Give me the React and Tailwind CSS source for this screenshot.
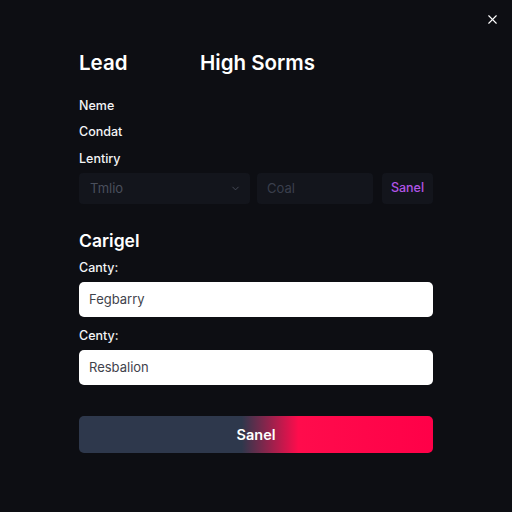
import { X, ChevronDown } from 'lucide-react'

export default function App() {
  return (
    <div
      className="relative w-[512px] h-[512px] bg-[#0d0e13] text-white overflow-hidden"
      style={{ fontFamily: 'Inter, "Noto Sans", sans-serif' }}
    >
      <button className="absolute right-[12px] top-[12px] text-white">
        <X size={15} strokeWidth={1.8} />
      </button>

      <div className="flex flex-col px-[79px] pt-[51px]">
        <div className="flex items-center h-[24px] text-[20.5px] font-semibold">
          <span className="w-[121px]">Lead</span>
          <span>High Sorms</span>
        </div>

        <div className="flex flex-col mt-[18px] text-[12.5px] font-medium text-gray-100">
          <span className="h-[26px] leading-[26px]">Neme</span>
          <span className="h-[26px] leading-[26px]">Condat</span>
          <span className="h-[28px] leading-[28px]">Lentiry</span>
        </div>

        <div className="flex gap-[7px] h-[31px] text-[13px]">
          <div className="w-[171px] flex items-center justify-between rounded-[4px] bg-[#13151c] pl-[11px] pr-[9px] text-[#4a4f5c]">
            <span>Tmlio</span>
            <ChevronDown size={11} strokeWidth={2} />
          </div>
          <div className="w-[116px] flex items-center rounded-[4px] bg-[#13151c] px-[10px] text-[#3a3f4c]">
            Coal
          </div>
          <div className="flex-1 ml-[2px] flex items-center justify-center rounded-[4px] bg-[#13151c] text-[#b154e6] text-[12.5px] font-medium">
            Sanel
          </div>
        </div>

        <div className="mt-[26px] h-[22px] leading-[22px] text-[17.5px] font-semibold">Carigel</div>

        <div className="mt-[8px] h-[16px] leading-[16px] text-[12.5px] font-medium text-gray-100">Canty:</div>
        <div className="mt-[6px] h-[35px] flex items-center rounded-[5px] bg-white px-[10px] text-[13px] text-[#3f434c]">
          Fegbarry
        </div>

        <div className="mt-[11px] h-[16px] leading-[16px] text-[12.5px] font-medium text-gray-100">Centy:</div>
        <div className="mt-[6px] h-[35px] flex items-center rounded-[5px] bg-white px-[10px] text-[13px] text-[#3f434c]">
          Resbalion
        </div>

        <button className="mt-[31px] h-[37px] rounded-[5px] bg-[linear-gradient(90deg,#2e384c_0%,#2e384c_46%,#ff0c4c_62%,#ff0048_100%)] text-[14.5px] font-semibold text-white">
          Sanel
        </button>
      </div>
    </div>
  )
}
